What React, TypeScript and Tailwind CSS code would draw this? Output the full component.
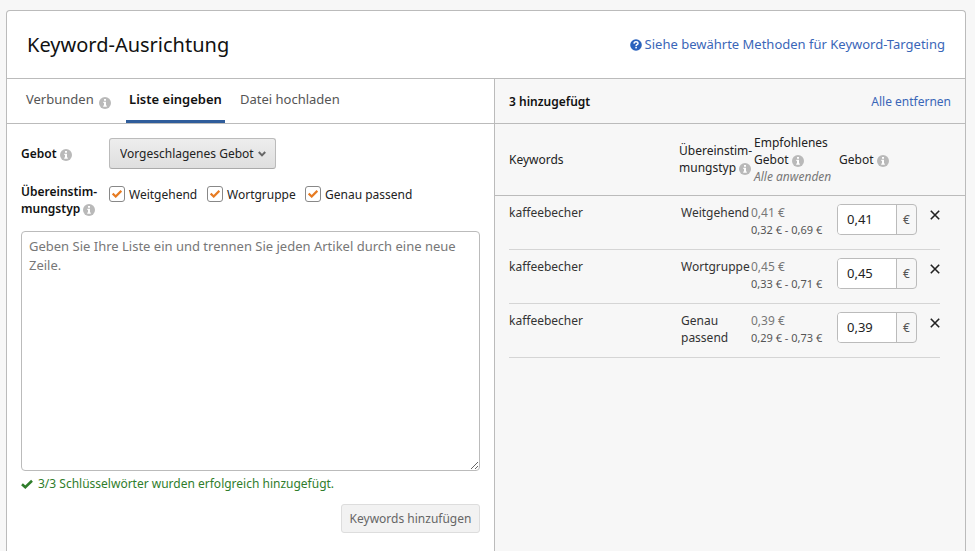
import { useState } from "react";

interface KeywordRow {
  id: string;
  keyword: string;
  match: string;
  suggested: string;
  range: string;
  bid: string;
}

const initialRows: KeywordRow[] = [
  {
    id: "broad",
    keyword: "kaffeebecher",
    match: "Weitgehend",
    suggested: "0,41 €",
    range: "0,32 € - 0,69 €",
    bid: "0,41",
  },
  {
    id: "phrase",
    keyword: "kaffeebecher",
    match: "Wortgruppe",
    suggested: "0,45 €",
    range: "0,33 € - 0,71 €",
    bid: "0,45",
  },
  {
    id: "exact",
    keyword: "kaffeebecher",
    match: "Genau passend",
    suggested: "0,39 €",
    range: "0,29 € - 0,73 €",
    bid: "0,39",
  },
];

const matchTypes = ["Weitgehend", "Wortgruppe", "Genau passend"];

function InfoIcon() {
  return (
    <svg viewBox="0 0 12 12" className="inline-block size-3 shrink-0 align-[-3px]" aria-hidden="true">
      <circle cx="6" cy="6" r="6" fill="#b9b9b9" />
      <path d="M5 2h2v1.7H5zM4.3 4.7H7v3.8h.8v1.2H4.2V8.5H5V5.9h-.7z" fill="#fff" />
    </svg>
  );
}

function HelpIcon() {
  return (
    <svg viewBox="0 0 12 12" className="size-3 shrink-0" aria-hidden="true">
      <circle cx="6" cy="6" r="5.8" fill="#2a62bd" />
      <path
        d="M4 4.6C4.1 3.3 4.9 2.7 6 2.7c1.2 0 2 .7 2 1.7 0 1.3-1.9 1.3-1.9 2.5"
        fill="none"
        stroke="#fff"
        strokeWidth="1.5"
      />
      <rect x="5.3" y="7.8" width="1.6" height="1.6" fill="#fff" />
    </svg>
  );
}

export default function App() {
  const [rows, setRows] = useState(initialRows);
  const [text, setText] = useState("");

  const updateBid = (id: string, bid: string) => {
    setRows((prev) => prev.map((r) => (r.id === id ? { ...r, bid } : r)));
  };

  const removeRow = (id: string) => {
    setRows((prev) => prev.filter((r) => r.id !== id));
  };

  return (
    <div className="flex min-h-screen flex-col bg-[#f7f7f7] pt-[10px] pr-[9px] pl-[6px] font-['Noto_Sans',sans-serif] text-[12px] leading-[17px] text-[#333]">
      <main className="flex flex-1 flex-col rounded-t-[4px] border border-b-0 border-[#bbb] bg-white">
        {/* Header */}
        <header className="flex h-[68px] items-center justify-between border-b border-[#bbb] pr-5 pl-5">
          <h1 className="text-[20px] leading-[28px] text-[#111]">Keyword-Ausrichtung</h1>
          <a href="#tipps" className="flex items-center gap-[3px] text-[13px] text-[#3a66b8]">
            <HelpIcon />
            Siehe bewährte Methoden für Keyword-Targeting
          </a>
        </header>

        <div className="grid flex-1 grid-cols-[487fr_471fr]">
          {/* Keyword entry */}
          <section className="min-w-0">
            <nav className="flex h-[45px] border-b border-[#bbb] pl-[14px] text-[13px] text-[#555]">
              <button className="flex w-[105px] items-center gap-[5px] px-[5px] pb-[3px]">
                Verbunden
                <span className="pt-1">
                  <InfoIcon />
                </span>
              </button>
              <button className="w-[99px] border-b-[3px] border-[#2f5d9b] text-center font-semibold text-[#111]">
                Liste eingeben
              </button>
              <button className="ml-[10px] px-[5px] pb-[3px]">Datei hochladen</button>
            </nav>

            <div className="flex flex-col gap-[14px] px-[14px] pt-[14px]">
              <div className="flex items-center">
                <label htmlFor="bid" className="w-[88px] font-semibold text-[#111]">
                  Gebot <InfoIcon />
                </label>
                <div className="grid w-[167px] items-center">
                  <select
                    id="bid"
                    className="col-start-1 row-start-1 h-[31px] appearance-none rounded-[3px] border border-[#bbb] border-b-[#aaa] bg-linear-to-b from-[#ededed] to-[#dfdfdf] pl-[10px] text-[#222]"
                  >
                    <option>Vorgeschlagenes Gebot</option>
                  </select>
                  <svg
                    viewBox="0 0 8 6"
                    className="pointer-events-none col-start-1 row-start-1 mr-[10px] h-[6px] w-2 justify-self-end"
                    aria-hidden="true"
                  >
                    <path d="M.8 1 4 4.400 7.200 1" fill="none" stroke="#666" strokeWidth="2" />
                  </svg>
                </div>
              </div>

              <fieldset className="flex">
                <legend className="float-left w-[88px] font-semibold text-[#111]">
                  Übereinstim-
                  <br />
                  mungstyp <InfoIcon />
                </legend>
                <div className="flex pt-[3px] text-[#222]">
                  {matchTypes.map((m) => (
                    <label key={m} className="flex h-4 w-[98px] items-center gap-1 whitespace-nowrap">
                      <span className="grid place-items-center">
                        <input
                          type="checkbox"
                          defaultChecked
                          className="peer col-start-1 row-start-1 size-4 appearance-none rounded-[3px] border border-[#888] bg-white"
                        />
                        <svg
                          viewBox="0 0 10 8"
                          className="pointer-events-none invisible col-start-1 row-start-1 h-2 w-[10px] peer-checked:visible"
                          aria-hidden="true"
                        >
                          <path d="M.7 3.6 3.7 6.5 9.3.8" fill="none" stroke="#e77b22" strokeWidth="2.2" />
                        </svg>
                      </span>
                      {m}
                    </label>
                  ))}
                </div>
              </fieldset>

              <textarea
                aria-label="Keywords"
                value={text}
                onChange={(e) => setText(e.target.value)}
                placeholder="Geben Sie Ihre Liste ein und trennen Sie jeden Artikel durch eine neue Zeile."
                className="block h-60 w-full rounded-[4px] border border-[#bbb] bg-white px-[7px] py-[5px] text-[13px] leading-[19px] placeholder:text-[#777]"
              />
            </div>

            <div className="flex flex-col px-[14px] pt-1">
              <p className="flex items-center gap-[5px] text-[#2f7d2b]">
                <svg viewBox="0 0 12 10" className="h-[10px] w-3" aria-hidden="true">
                  <path d="M1 5.200 4.300 8.200 11 1.800" fill="none" stroke="#2f7d2b" strokeWidth="2.600" />
                </svg>
                3/3 Schlüsselwörter wurden erfolgreich hinzugefügt.
              </p>
              <button className="mt-3 h-[29px] w-[139px] self-end rounded-[3px] border border-[#ddd] bg-[#f2f2f2] text-center text-[#666]">
                Keywords hinzufügen
              </button>
            </div>
          </section>

          {/* Added keywords */}
          <section className="min-w-0 border-l border-[#bbb] bg-[#f7f7f7]">
            <div className="flex h-[45px] items-center justify-between border-b border-[#bbb] pr-[14px] pl-[14px]">
              <h2 className="font-semibold text-[#111]">{rows.length} hinzugefügt</h2>
              <button onClick={() => setRows([])} className="text-[#3a66b8]">
                Alle entfernen
              </button>
            </div>

            <table className="w-full table-fixed text-left">
              <thead>
                <tr className="h-[71px] border-b border-[#bbb] text-[#222]">
                  <th scope="col" className="pl-[14px] font-normal">
                    Keywords
                  </th>
                  <th scope="col" className="w-[72px] font-normal whitespace-nowrap">
                    Übereinstim-
                    <br />
                    mungstyp <InfoIcon />
                  </th>
                  <th scope="col" className="w-[86px] pl-[3px] font-normal">
                    Empfohlenes
                    <br />
                    Gebot <InfoIcon />
                    <button className="block text-[#777] italic">Alle anwenden</button>
                  </th>
                  <th scope="col" className="w-[90px] pl-[2px] font-normal">
                    Gebot <InfoIcon />
                  </th>
                  <th scope="col" className="w-[38px]" aria-label="Aktion" />
                </tr>
              </thead>
              <tbody>
                {rows.map((r) => (
                  <tr key={r.id}>
                    <td className="pl-[14px]">
                      <div className="h-[54px] border-b border-[#d5d5d5] pt-2">{r.keyword}</div>
                    </td>
                    <td>
                      <div className="h-[54px] border-b border-[#d5d5d5] pt-2 pl-[2px]">{r.match}</div>
                    </td>
                    <td>
                      <div className="h-[54px] border-b border-[#d5d5d5] pt-2 whitespace-nowrap">
                        <p className="text-[#777]">{r.suggested}</p>
                        <p className="text-[11px] text-[#555]">{r.range}</p>
                      </div>
                    </td>
                    <td>
                      <div className="h-[54px] border-b border-[#d5d5d5] pt-2">
                        <div className="flex h-[31px] w-20 overflow-hidden rounded-[4px] border border-[#bbb]">
                          <input
                            aria-label={`Gebot ${r.match}`}
                            value={r.bid}
                            onChange={(e) => updateBid(r.id, e.target.value)}
                            className="w-full min-w-0 bg-white pl-[9px] text-[13px] text-[#222]"
                          />
                          <span className="flex w-5 shrink-0 items-center justify-center border-l border-[#bbb] text-[#555]">
                            €
                          </span>
                        </div>
                      </div>
                    </td>
                    <td className="pr-[25px]">
                      <div className="flex h-[54px] items-start justify-end border-b border-[#d5d5d5] pt-[14px]">
                        <button onClick={() => removeRow(r.id)} aria-label="Entfernen">
                          <svg viewBox="0 0 10 10" className="size-[10px]" aria-hidden="true">
                            <path d="M.8.800 9.200 9.200M9.200.800.800 9.200" stroke="#222" strokeWidth="1.600" />
                          </svg>
                        </button>
                      </div>
                    </td>
                  </tr>
                ))}
              </tbody>
            </table>
          </section>
        </div>
      </main>
    </div>
  );
}
